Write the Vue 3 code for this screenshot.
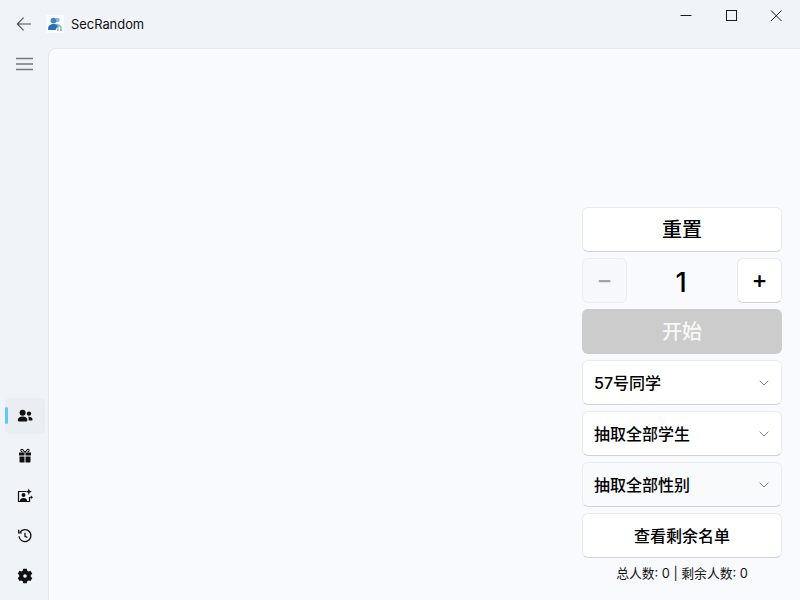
<script setup>
const selects = [
  { label: '57号同学', tone: 'white' },
  { label: '抽取全部学生', tone: 'white' },
  { label: '抽取全部性别', tone: 'soft' },
]
</script>

<template>
  <div class="window">
    <header class="titlebar">
      <button class="tbtn back" aria-label="back">
        <svg width="16" height="16" viewBox="0 0 16 16"><path d="M15 8H1.6M7.6 1.6 1.3 8l6.3 6.4" fill="none" stroke="#4a4d52" stroke-width="1.1"/></svg>
      </button>
      <span class="logo">
        <svg width="16" height="16" viewBox="0 0 16 16">
          <circle cx="10.400" cy="4" r="2.300" fill="#8fb9dc"/>
          <path d="M7 8.500c3-1.300 7-.6 7.500 2.500H7z" fill="#8fb9dc"/>
          <circle cx="6.500" cy="4.600" r="2.900" fill="#3f86c9"/>
          <path d="M1 12.800c0-3.300 2.500-4.800 5.500-4.800 2 0 3.400.6 4.300 1.700L8.500 14H2c-.7 0-1-.4-1-1.200Z" fill="#2f6fb5"/>
          <path d="M10 11.800h1.600M13 11.800h1.800M10 14h1.600M13 14h1.800" stroke="#5ea98f" stroke-width="1.300"/>
        </svg>
      </span>
      <span class="apptitle">SecRandom</span>
      <div class="winctl">
        <svg width="12" height="12" viewBox="0 0 12 12"><path d="M0.500 5.500H11.500" stroke="#1c1c1c" stroke-width="1"/></svg>
        <svg width="12" height="12" viewBox="0 0 12 12"><rect x="1.500" y="0.500" width="10" height="10" fill="none" stroke="#1c1c1c" stroke-width="1"/></svg>
        <svg width="12" height="12" viewBox="0 0 12 12"><path d="M1 .5l10.500 10.500M11.500 .5 1 11" stroke="#1c1c1c" stroke-width="1"/></svg>
      </div>
    </header>

    <div class="body">
      <aside class="sidebar">
        <button class="menu" aria-label="menu">
          <svg width="17" height="14" viewBox="0 0 17 14"><path d="M0 1.500h17M0 7h17M0 12.500h17" stroke="#74777c" stroke-width="1.600"/></svg>
        </button>
        <nav class="nav">
          <div class="navitem active">
            <span class="marker"></span>
            <svg width="16" height="16" viewBox="0 0 16 16" fill="#111"><circle cx="5.600" cy="4.800" r="3"/><circle cx="12" cy="5.600" r="2.200"/><path d="M.8 12.200c0-2.400 2-3.600 4.800-3.600s4.800 1.200 4.800 3.600c0 .9-.7 1.300-1.600 1.300H2.400c-.9 0-1.600-.4-1.600-1.300Z"/><path d="M11.200 8.700c2.300-.3 4.300.8 4.300 2.700 0 .8-.5 1.200-1.300 1.200h-2.500c.2-1.500-.1-2.900-.5-3.900Z"/></svg>
          </div>
          <div class="navitem">
            <svg width="16" height="16" viewBox="0 0 16 16" fill="#111"><path d="M2 4.500h5.500v3H2zM8.500 4.500H14v3H8.500zM2.500 8.500h5v6H3.500c-.6 0-1-.4-1-1zM8.500 8.500h5v5c0 .6-.4 1-1 1H8.500z"/><path d="M8 4.300 5.500 1.500c-1-.7-2.200.6-1.300 1.600L5.500 4.300M8 4.300l2.500-2.800c1-.7 2.200.6 1.300 1.600l-1.300 1.200" fill="none" stroke="#111" stroke-width="1.100"/></svg>
          </div>
          <div class="navitem">
            <svg width="16" height="16" viewBox="0 0 16 16"><path d="M9 3.500H1.500v10h11V9" fill="none" stroke="#111" stroke-width="1.200"/><circle cx="6.500" cy="7" r="2" fill="#111"/><path d="M2.800 13.500c0-2.400 1.700-3.400 3.700-3.400s3.700 1 3.700 3.400z" fill="#111"/><path d="M11.800 0.500l.9 2.300 2.300.9-2.300.9-.9 2.300-.9-2.300-2.300-.9 2.300-.9z" fill="#111"/><path d="M14.300 7.800v3M12.800 9.300h3" stroke="#111" stroke-width="1"/></svg>
          </div>
          <div class="navitem">
            <svg width="16" height="16" viewBox="0 0 16 16" fill="none" stroke="#111" stroke-width="1.300"><path d="M3 4.200A6 6 0 1 1 2 8.200"/><path d="M1.700 1.800v3h3"/><path d="M8 4.800v3.500l2.500 1.200"/></svg>
          </div>
          <div class="navitem">
            <svg width="16" height="16" viewBox="0 0 16 16"><path fill="#111" fill-rule="evenodd" d="M6.200.7h3.600l.4 2a5.300 5.300 0 0 1 1.300.8l2-.7 1.800 3-1.500 1.300a5.300 5.300 0 0 1 0 1.700l1.500 1.300-1.800 3-2-.7a5.300 5.300 0 0 1-1.300.8l-.4 2H6.200l-.4-2a5.300 5.300 0 0 1-1.300-.8l-2 .7-1.800-3L2.200 8.800a5.300 5.300 0 0 1 0-1.700L.7 5.800l1.800-3 2 .7a5.300 5.300 0 0 1 1.300-.8ZM8 6.200a1.800 1.800 0 1 0 0 3.600 1.800 1.800 0 0 0 0-3.600Z"/></svg>
          </div>
        </nav>
      </aside>

      <main class="panel">
        <div class="controls">
          <button class="card big">重置</button>
          <div class="stepper">
            <button class="card step disabled">−</button>
            <span class="count">1</span>
            <button class="card step">+</button>
          </div>
          <button class="start">开始</button>
          <div v-for="s in selects" :key="s.label" class="card select" :class="s.tone">
            <span>{{ s.label }}</span>
            <svg class="chev" width="10" height="6" viewBox="0 0 10 6"><path d="M.7.700 5 5l4.300-4.300" fill="none" stroke="#7d7f83" stroke-width="1"/></svg>
          </div>
          <button class="card list">查看剩余名单</button>
          <p class="summary">总人数: 0 | 剩余人数: 0</p>
        </div>
      </main>
    </div>
  </div>
</template>

<style>
html, body { margin: 0; padding: 0; }
</style>

<style scoped>
.window {
  width: 800px;
  height: 600px;
  overflow: hidden;
  display: flex;
  flex-direction: column;
  background: #f0f3f8;
  font-family: Inter, "Noto Sans CJK SC", sans-serif;
  color: #000;
}
.titlebar {
  height: 48px;
  flex: none;
  display: flex;
  align-items: center;
}
.tbtn {
  border: 0;
  background: none;
  padding: 0;
  width: 48px;
  height: 48px;
  display: flex;
  align-items: center;
  justify-content: center;
}
.logo {
  width: 18px;
  height: 18px;
  display: flex;
  align-items: center;
  justify-content: center;
  background: #f9fbfe;
  margin-left: -2px;
}
.apptitle {
  margin-left: 7px;
  font-size: 12.900px;
  color: #111;
}
.winctl {
  margin-left: auto;
  margin-right: 18px;
  margin-top: -16px;
  display: flex;
  gap: 33px;
}
.body {
  flex: 1;
  display: flex;
  min-height: 0;
}
.sidebar {
  width: 48px;
  flex: none;
  display: flex;
  flex-direction: column;
  justify-content: space-between;
}
.menu {
  border: 0;
  background: none;
  padding: 0;
  width: 48px;
  height: 32px;
  display: flex;
  align-items: center;
  justify-content: center;
}
.nav {
  display: flex;
  flex-direction: column;
  gap: 4px;
  padding: 0 3px 6px 5px;
}
.navitem {
  position: relative;
  height: 36px;
  display: flex;
  align-items: center;
  justify-content: center;
  border-radius: 5px;
}
.navitem.active {
  background: #eaedf2;
}
.marker {
  position: absolute;
  left: 0;
  top: 9px;
  width: 3px;
  height: 17px;
  border-radius: 2px;
  background: #63c8f3;
}
.panel {
  flex: 1;
  min-width: 0;
  margin-top: 0;
  background: #f9fafd;
  border-top: 1px solid #e5e7ec;
  border-left: 1px solid #e5e7ec;
  border-top-left-radius: 8px;
  display: flex;
  flex-direction: column;
  justify-content: flex-end;
  align-items: flex-end;
  padding: 0 18px 16px 0;
}
.controls {
  width: 200px;
  display: flex;
  flex-direction: column;
  gap: 6px;
}
.card {
  box-sizing: border-box;
  height: 45px;
  background: #fff;
  border: 1px solid #eaebef;
  border-bottom-color: #d2d3d6;
  border-radius: 6px;
  padding: 0;
  font-family: inherit;
  color: #000;
}
.big {
  font-size: 20px;
  font-weight: 500;
  padding-bottom: 2px;
}
.stepper {
  display: flex;
  align-items: center;
  justify-content: space-between;
}
.step {
  width: 45px;
  font-size: 24px;
  font-weight: 500;
  line-height: 1;
  padding-bottom: 1px;
}
.step.disabled {
  background: #f7f8fb;
  border-color: #ecedf1;
  color: #a2a3a5;
}
.count {
  font-size: 27px;
  font-weight: 500;
  padding: 3px 2px 0 0;
}
.start {
  height: 45px;
  border: 0;
  border-radius: 6px;
  background: #cccccc;
  color: #f8f8f8;
  font-size: 20px;
  font-family: inherit;
  font-weight: 500;
  padding: 0 0 2px;
}
.select {
  display: flex;
  align-items: center;
  justify-content: space-between;
  padding: 0 12px 2px 11px;
  font-size: 16px;
  font-weight: 500;
}
.select.soft {
  background: #f9fafc;
}
.chev {
  margin-top: 2px;
}
.list {
  font-size: 16px;
  font-weight: 500;
  padding-bottom: 2px;
}
.summary {
  margin: 0;
  height: 20px;
  line-height: 20px;
  text-align: center;
  font-size: 12.800px;
  color: #111;
}
</style>
